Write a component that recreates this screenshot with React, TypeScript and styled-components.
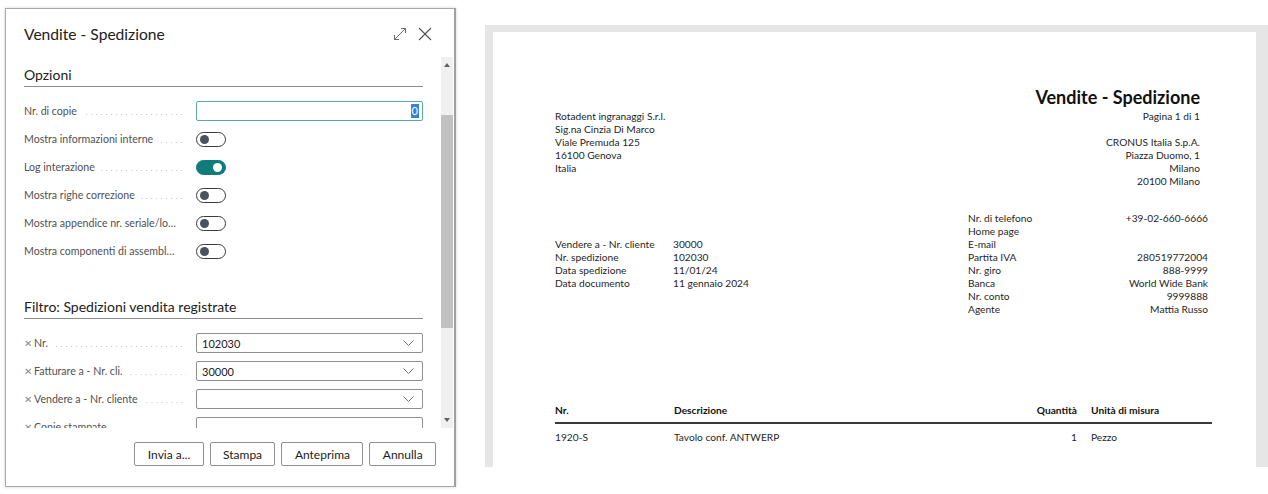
import React from "react";
import styled, { createGlobalStyle, css } from "styled-components";

const GlobalStyle = createGlobalStyle`
  html, body { margin: 0; padding: 0; background: #ffffff; }
  body { font-family: "Segoe UI", Lato, "Open Sans", sans-serif; color: #212121; }
  * { box-sizing: border-box; }
`;

const Page = styled.div`
  display: flex;
  align-items: flex-start;
  width: 1268px;
  height: 494px;
  overflow: hidden;
`;

const DialogWrap = styled.div`
  padding: 8px 0 0 5px;
  flex-shrink: 0;
`;

const Dialog = styled.div`
  width: 451px;
  height: 479px;
  border: 1px solid #a9a9a9;
  border-right: 2px solid #a0a0a0;
  box-shadow: 0 0 3px rgba(0, 0, 0, 0.18);
  background: #fff;
  display: flex;
  flex-direction: column;
`;

const Header = styled.div`
  height: 48px;
  flex-shrink: 0;
  display: flex;
  align-items: flex-start;
  padding: 15px 22px 0 18px;
`;

const Title = styled.div`
  flex: 1;
  font-size: 15.6px;
  line-height: 20px;
  color: #212121;
`;

const HeaderIcons = styled.div`
  display: flex;
  align-items: center;
  gap: 11px;
  height: 20px;
  color: #505050;
`;

const Body = styled.div`
  flex: 1;
  min-height: 0;
  display: flex;
`;

const ScrollContent = styled.div`
  flex: 1;
  overflow: hidden;
  padding: 8px 18px 0 18px;
`;

const SectionTitle = styled.div<{ $gap?: number }>`
  font-size: 14px;
  line-height: 20px;
  color: #212121;
  padding-bottom: 1px;
  border-bottom: 1px solid #8c8c8c;
  margin-top: ${(p) => p.$gap ?? 0}px;
`;

const Rows = styled.div`
  margin-top: 10px;
  display: flex;
  flex-direction: column;
`;

const Row = styled.div`
  display: flex;
  align-items: center;
  height: 28px;
`;

const LabelCell = styled.div`
  width: 172px;
  flex-shrink: 0;
  display: flex;
  align-items: center;
  font-size: 10.6px;
  color: #505050;
`;

const LabelText = styled.span`
  flex: 0 1 auto;
  min-width: 0;
  white-space: nowrap;
  overflow: hidden;
  text-overflow: ellipsis;
`;

const ClearMark = styled.span`
  font-size: 10px;
  color: #8a8a8a;
  margin-right: 2px;
`;

const Leader = styled.span`
  flex: 1 1 auto;
  min-width: 2px;
  height: 1px;
  margin: 0 10px 0 5px;
  transform: translateY(3px);
  background-image: linear-gradient(to right, #c4c4c4 1px, transparent 1px);
  background-size: 5px 1px;
  background-repeat: repeat-x;
  background-position: right center;
`;

const Field = styled.div<{ $focused?: boolean }>`
  width: 228px;
  height: 20px;
  border: 1px solid ${(p) => (p.$focused ? "#5aa8a8" : "#8f8f8f")};
  border-radius: 2px;
  display: flex;
  align-items: center;
  padding: 0 8px 0 5px;
  font-size: 11px;
  color: #212121;
  ${(p) =>
    p.$focused &&
    css`
      justify-content: flex-end;
      padding-right: 3px;
    `}
`;

const FieldValue = styled.span`
  flex: 1;
`;

const Selected = styled.span`
  background: #3a7fdc;
  color: #ffffff;
  padding: 0 1px;
  line-height: 14px;
`;

const Toggle = styled.span<{ $on?: boolean }>`
  width: 30px;
  height: 15px;
  border-radius: 8px;
  border: 1px solid ${(p) => (p.$on ? "#107c7a" : "#3b3b3b")};
  background: ${(p) => (p.$on ? "#107c7a" : "#ffffff")};
  display: flex;
  align-items: center;
  justify-content: ${(p) => (p.$on ? "flex-end" : "flex-start")};
  padding: 0 3px;
`;

const Knob = styled.span<{ $on?: boolean }>`
  width: 9px;
  height: 9px;
  border-radius: 50%;
  background: ${(p) => (p.$on ? "#ffffff" : "#4b5162")};
`;

const Scrollbar = styled.div`
  width: 12px;
  margin-right: 1px;
  background: #f0f0f0;
  display: flex;
  flex-direction: column;
  align-items: center;
`;

const Arrow = styled.div<{ $down?: boolean }>`
  height: 16px;
  flex-shrink: 0;
  display: flex;
  align-items: center;
  justify-content: center;
  &::before {
    content: "";
    border-left: 3px solid transparent;
    border-right: 3px solid transparent;
    ${(p) =>
      p.$down
        ? css`border-top: 4px solid #606060;`
        : css`border-bottom: 4px solid #606060;`}
  }
`;

const Thumb = styled.div<{ $offset: number; $size: number }>`
  width: 100%;
  margin-top: ${(p) => p.$offset}px;
  height: ${(p) => p.$size}px;
  background: #c1c1c1;
`;

const Spacer = styled.div`
  flex: 1;
`;

const Footer = styled.div`
  height: 58px;
  flex-shrink: 0;
  display: flex;
  justify-content: flex-end;
  align-items: flex-start;
  gap: 6px;
  padding: 14px 18px 0 0;
`;

const Button = styled.button`
  margin: 0;
  height: 24px;
  padding: 0 12.4px;
  border: 1px solid #8f8f8f;
  border-radius: 2px;
  background: #ffffff;
  font-family: inherit;
  font-size: 12px;
  color: #212121;
`;

/* Report preview */
const PreviewFrame = styled.div`
  margin: 25px 0 0 29px;
  width: 783px;
  height: 442px;
  background: #e6e6e6;
  padding: 7px 12px 0 8px;
  display: flex;
  flex-shrink: 0;
`;

const Sheet = styled.div`
  flex: 1;
  background: #ffffff;
  padding: 55px 44px 0 62px;
  font-size: 10.2px;
  line-height: 13px;
  color: #1f1f1f;
`;

const ReportTitle = styled.div`
  text-align: right;
  font-size: 18px;
  line-height: 20px;
  font-weight: 700;
  color: #111;
  margin-right: 12px;
`;

const TwoCol = styled.div`
  display: flex;
  justify-content: space-between;
  margin-top: 2.5px;
`;

const Lines = styled.div<{ $right?: boolean; $mr?: number }>`
  display: flex;
  flex-direction: column;
  text-align: ${(p) => (p.$right ? "right" : "left")};
  margin-right: ${(p) => p.$mr ?? 0}px;
`;

const Line = styled.div`
  height: 13px;
  white-space: nowrap;
`;

const InfoGrid = styled.div`
  display: grid;
  grid-template-columns: 1fr 240px;
  margin-top: 24px;
  margin-right: 4px;
`;

const KeyValues = styled.div<{ $labelWidth?: number; $offset?: number; $valueRight?: boolean }>`
  display: grid;
  grid-template-columns: ${(p) => (p.$labelWidth ? `${p.$labelWidth}px` : "1fr")} ${(p) => (p.$valueRight ? "auto" : "1fr")};
  grid-auto-rows: 13px;
  align-content: start;
  margin-top: ${(p) => p.$offset ?? 0}px;
  white-space: nowrap;
`;

const Value = styled.span<{ $right?: boolean }>`
  text-align: ${(p) => (p.$right ? "right" : "left")};
`;

const Table = styled.div`
  margin-top: 88px;
`;

const TableRow = styled.div<{ $head?: boolean }>`
  display: grid;
  grid-template-columns: 119px 1fr auto 135px;
  line-height: 13px;
  ${(p) =>
    p.$head
      ? css`
          font-weight: 700;
          color: #111;
          padding-bottom: 5px;
          border-bottom: 2px solid #3a3a3a;
        `
      : css`
          padding-top: 7px;
        `}
`;

const Cell = styled.span<{ $right?: boolean; $pad?: number }>`
  text-align: ${(p) => (p.$right ? "right" : "left")};
  padding-left: ${(p) => p.$pad ?? 0}px;
  white-space: nowrap;
`;

const ExpandIcon = () => (
  <svg width="14" height="14" viewBox="0 0 14 14" fill="none" stroke="#6b6b6b" strokeWidth="1">
    <line x1="1.5" y1="12.5" x2="12.5" y2="1.5" />
    <polyline points="8,1.5 12.5,1.5 12.5,6" />
    <polyline points="1.5,8 1.5,12.5 6,12.5" />
  </svg>
);

const CloseIcon = () => (
  <svg width="14" height="14" viewBox="0 0 14 14" fill="none" stroke="#505050" strokeWidth="1.1">
    <line x1="1" y1="1" x2="13" y2="13" />
    <line x1="13" y1="1" x2="1" y2="13" />
  </svg>
);

const Chevron = () => (
  <svg width="11" height="6" viewBox="0 0 11 6" fill="none" stroke="#707070" strokeWidth="1">
    <polyline points="0.5,0.5 5.5,5.5 10.5,0.5" />
  </svg>
);

const options: { label: string; on?: boolean }[] = [
  { label: "Mostra informazioni interne" },
  { label: "Log interazione", on: true },
  { label: "Mostra righe correzione" },
  { label: "Mostra appendice nr. seriale/lotto" },
  { label: "Mostra componenti di assemblaggio" },
];

const filters: { label: string; value: string; select: boolean }[] = [
  { label: "Nr.", value: "102030", select: true },
  { label: "Fatturare a - Nr. cli.", value: "30000", select: true },
  { label: "Vendere a - Nr. cliente", value: "", select: true },
  { label: "Copie stampate", value: "", select: false },
];

const Label = ({ text, clear }: { text: string; clear?: boolean }) => (
  <LabelCell>
    {clear && <ClearMark>✕</ClearMark>}
    <LabelText>{text}</LabelText>
    <Leader />
  </LabelCell>
);

export default function App() {
  return (
    <>
      <GlobalStyle />
      <Page>
        <DialogWrap>
          <Dialog>
            <Header>
              <Title>Vendite - Spedizione</Title>
              <HeaderIcons>
                <ExpandIcon />
                <CloseIcon />
              </HeaderIcons>
            </Header>
            <Body>
              <ScrollContent>
                <SectionTitle>Opzioni</SectionTitle>
                <Rows>
                  <Row>
                    <Label text="Nr. di copie" />
                    <Field $focused>
                      <Selected>0</Selected>
                    </Field>
                  </Row>
                  {options.map((o) => (
                    <Row key={o.label}>
                      <Label text={o.label} />
                      <Toggle $on={o.on}>
                        <Knob $on={o.on} />
                      </Toggle>
                    </Row>
                  ))}
                </Rows>
                <SectionTitle $gap={32}>Filtro: Spedizioni vendita registrate</SectionTitle>
                <Rows>
                  {filters.map((f) => (
                    <Row key={f.label}>
                      <Label text={f.label} clear />
                      <Field>
                        <FieldValue>{f.value}</FieldValue>
                        {f.select && <Chevron />}
                      </Field>
                    </Row>
                  ))}
                </Rows>
              </ScrollContent>
              <Scrollbar>
                <Arrow />
                <Thumb $offset={42} $size={213} />
                <Spacer />
                <Arrow $down />
              </Scrollbar>
            </Body>
            <Footer>
              <Button>Invia a...</Button>
              <Button>Stampa</Button>
              <Button>Anteprima</Button>
              <Button>Annulla</Button>
            </Footer>
          </Dialog>
        </DialogWrap>

        <PreviewFrame>
          <Sheet>
            <ReportTitle>Vendite - Spedizione</ReportTitle>
            <TwoCol>
              <Lines>
                <Line>Rotadent ingranaggi S.r.l.</Line>
                <Line>Sig.na Cinzia Di Marco</Line>
                <Line>Viale Premuda 125</Line>
                <Line>16100 Genova</Line>
                <Line>Italia</Line>
              </Lines>
              <Lines $right $mr={12}>
                <Line>Pagina 1 di 1</Line>
                <Line />
                <Line>CRONUS Italia S.p.A.</Line>
                <Line>Piazza Duomo, 1</Line>
                <Line>Milano</Line>
                <Line>20100 Milano</Line>
              </Lines>
            </TwoCol>
            <InfoGrid>
              <KeyValues $labelWidth={118} $offset={26}>
                <span>Vendere a - Nr. cliente</span>
                <Value>30000</Value>
                <span>Nr. spedizione</span>
                <Value>102030</Value>
                <span>Data spedizione</span>
                <Value>11/01/24</Value>
                <span>Data documento</span>
                <Value>11 gennaio 2024</Value>
              </KeyValues>
              <KeyValues $valueRight>
                <span>Nr. di telefono</span>
                <Value $right>+39-02-660-6666</Value>
                <span>Home page</span>
                <Value $right />
                <span>E-mail</span>
                <Value $right />
                <span>Partita IVA</span>
                <Value $right>280519772004</Value>
                <span>Nr. giro</span>
                <Value $right>888-9999</Value>
                <span>Banca</span>
                <Value $right>World Wide Bank</Value>
                <span>Nr. conto</span>
                <Value $right>9999888</Value>
                <span>Agente</span>
                <Value $right>Mattia Russo</Value>
              </KeyValues>
            </InfoGrid>
            <Table>
              <TableRow $head>
                <Cell>Nr.</Cell>
                <Cell>Descrizione</Cell>
                <Cell $right>Quantità</Cell>
                <Cell $pad={14}>Unità di misura</Cell>
              </TableRow>
              <TableRow>
                <Cell>1920-S</Cell>
                <Cell>Tavolo conf. ANTWERP</Cell>
                <Cell $right>1</Cell>
                <Cell $pad={14}>Pezzo</Cell>
              </TableRow>
            </Table>
          </Sheet>
        </PreviewFrame>
      </Page>
    </>
  );
}
